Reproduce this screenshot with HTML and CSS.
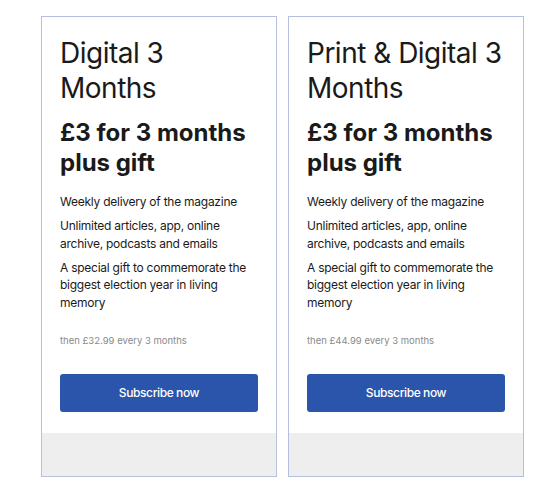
FILE: index.html
```html
<!DOCTYPE html>
<html lang="en">
<head>
<meta charset="utf-8">
<title>Subscriptions</title>
<link rel="stylesheet" href="styles.css">
</head>
<body>
<div class="cards">
  <div class="card">
    <div class="card-body">
      <h2 class="title">Digital 3 Months</h2>
      <h3 class="price">£3 for 3 months plus gift</h3>
      <ul class="features">
        <li>Weekly delivery of the magazine</li>
        <li>Unlimited articles, app, online archive, podcasts and emails</li>
        <li>A special gift to commemorate the biggest election year in living memory</li>
      </ul>
      <p class="then">then £32.99 every 3 months</p>
      <button class="btn">Subscribe now</button>
    </div>
    <div class="card-foot"></div>
  </div>
  <div class="card">
    <div class="card-body">
      <h2 class="title">Print &amp; Digital 3 Months</h2>
      <h3 class="price">£3 for 3 months plus gift</h3>
      <ul class="features">
        <li>Weekly delivery of the magazine</li>
        <li>Unlimited articles, app, online archive, podcasts and emails</li>
        <li>A special gift to commemorate the biggest election year in living memory</li>
      </ul>
      <p class="then">then £44.99 every 3 months</p>
      <button class="btn">Subscribe now</button>
    </div>
    <div class="card-foot"></div>
  </div>
</div>
</body>
</html>
```
FILE: styles.css
```css
html, body {
  margin: 0;
  padding: 0;
  background: #ffffff;
}
body {
  font-family: Inter, "Liberation Sans", sans-serif;
  color: #1a1a1a;
  padding: 16px 0 0 41px;
}
.cards {
  display: flex;
  gap: 11px;
}
.card {
  width: 234px;
  height: 459px;
  border: 1px solid #b6bfdd;
  display: flex;
  flex-direction: column;
  background: #fff;
}
.card-body {
  flex: 1;
  padding: 19px 18px 0 18px;
  display: flex;
  flex-direction: column;
}
.card-foot {
  height: 43px;
  background: #eeeeee;
}
.title {
  margin: 0;
  font-size: 28px;
  line-height: 35px;
  font-weight: 400;
  letter-spacing: -0.5px;
}
.price {
  margin: 12px 0 0 0;
  font-size: 24px;
  line-height: 30px;
  font-weight: 700;
}
.features {
  list-style: none;
  margin: 15px 0 0 0;
  padding: 0;
}
.features li {
  font-size: 12px;
  line-height: 17.5px;
  margin: 0 0 6.5px 0;
  letter-spacing: -0.25px;
}
.then {
  margin: 17px 0 0 0;
  font-size: 9.5px;
  line-height: 12px;
  color: #8a8a8a;
}
.btn {
  margin-top: 27px;
  height: 38px;
  width: 100%;
  border: none;
  border-radius: 3px;
  background: #2a55ab;
  color: #ffffff;
  font-family: Inter, "Liberation Sans", sans-serif;
  font-size: 12px;
  font-weight: 500;
  letter-spacing: -0.4px;
}
```
